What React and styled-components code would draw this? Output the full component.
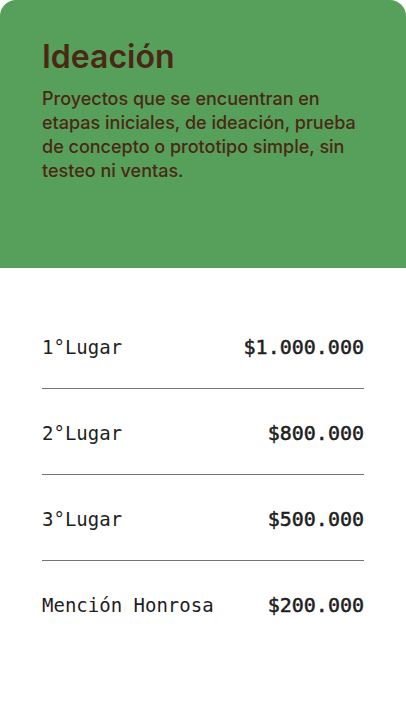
import styled, { createGlobalStyle } from 'styled-components';

const GlobalStyle = createGlobalStyle`
  body {
    margin: 0;
    background: #ffffff;
  }
`;

const prizes = [
  { label: '1°Lugar', amount: '$1.000.000' },
  { label: '2°Lugar', amount: '$800.000' },
  { label: '3°Lugar', amount: '$500.000' },
  { label: 'Mención Honrosa', amount: '$200.000' },
];

const Card = styled.section`
  width: 406px;
  min-height: 702px;
  background: #ffffff;
  border-radius: 16px 16px 0 0;
  overflow: hidden;
`;

const Header = styled.header`
  height: 268px;
  box-sizing: border-box;
  padding: 38px 42px 0;
  background: #57a05c;
  color: #4a2815;
  font-family: Inter, 'Noto Sans', sans-serif;
`;

const Title = styled.h2`
  margin: 0 0 11px;
  font-size: 32px;
  line-height: 38px;
  font-weight: 600;
`;

const Description = styled.p`
  margin: 0;
  font-size: 18px;
  line-height: 24px;
  font-weight: 500;
`;

const PrizeList = styled.ul`
  list-style: none;
  margin: 0;
  padding: 67px 42px 0;
`;

const PrizeRow = styled.li`
  display: flex;
  justify-content: space-between;
  align-items: center;
  padding: ${({ $first }) => ($first ? '0' : '32px')} 0 29px;
  border-bottom: ${({ $last }) => ($last ? 'none' : '1px solid #757575')};
  font-family: 'DejaVu Sans Mono', 'Liberation Mono', monospace;
  line-height: 24px;
  color: #1e1e1e;
`;

const Label = styled.span`
  font-size: 19px;
`;

const Amount = styled.span`
  font-size: 20px;
  -webkit-text-stroke: 0.5px #1e1e1e;
`;

export default function App() {
  return (
    <>
      <GlobalStyle />
      <Card>
        <Header>
          <Title>Ideación</Title>
          <Description>
            Proyectos que se encuentran en etapas iniciales, de ideación, prueba
            de concepto o prototipo simple, sin testeo ni ventas.
          </Description>
        </Header>
        <PrizeList>
          {prizes.map((prize, i) => (
            <PrizeRow
              key={prize.label}
              $first={i === 0}
              $last={i === prizes.length - 1}
            >
              <Label>{prize.label}</Label>
              <Amount>{prize.amount}</Amount>
            </PrizeRow>
          ))}
        </PrizeList>
      </Card>
    </>
  );
}
